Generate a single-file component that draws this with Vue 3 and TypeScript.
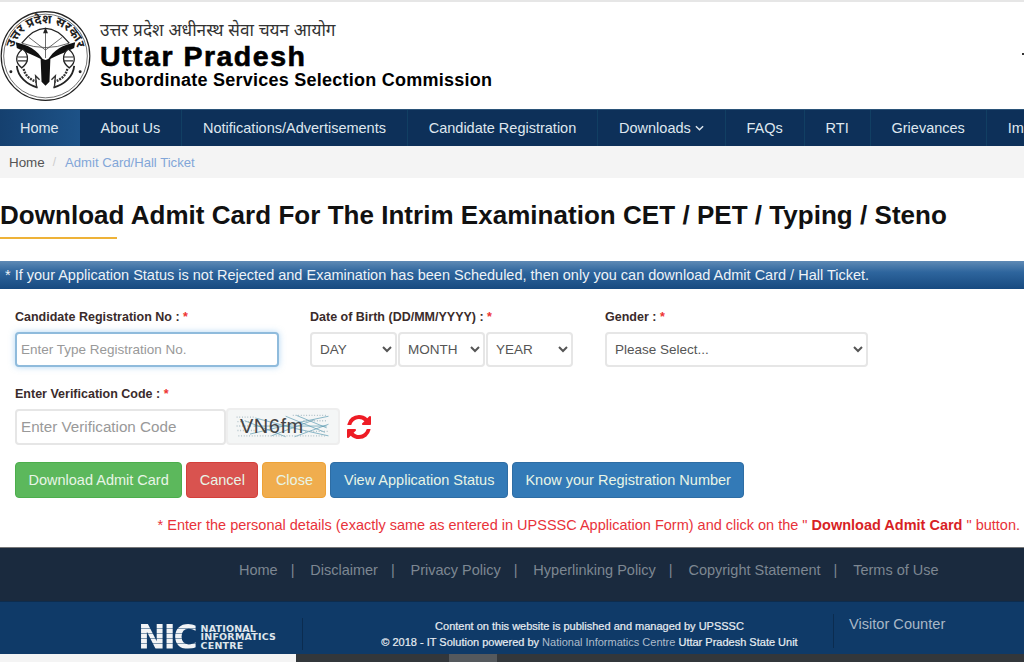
<template>
  <div class="page">
    <header class="masthead">
      <svg class="emblem" viewBox="0 0 92 92" aria-hidden="true">
        <defs>
          <path id="ring-text" d="M15 57.3 A33 33 0 1 1 77 57.3" />
        </defs>
        <circle cx="46" cy="46" r="44.8" fill="#fff" stroke="#222" stroke-width="1.2" />
        <circle cx="46" cy="46" r="42.3" fill="none" stroke="#333" stroke-width="0.7" />
        <text class="emblem__text"><textPath href="#ring-text" startOffset="50%" text-anchor="middle">उत्तर प्रदेश सरकार</textPath></text>
        <path d="M22 33 Q46 3 70 33" fill="none" stroke="#222" stroke-width="1.2" />
        <path d="M22 33 Q46 42 70 33 M46 18 V48 M29 27 L46 40 L63 27" fill="none" stroke="#444" stroke-width="0.8" />
        <path d="M43.5 23 L46 17 L48.5 23 Z" fill="#222" />
        <path d="M16 32 C28 35 38 39 44 51 C37 46 27 43 17 38 Z" fill="#111" />
        <path d="M76 32 C64 35 54 39 48 51 C55 46 65 43 75 38 Z" fill="#111" />
        <path d="M41 47 Q46 53 51 47 L50 72 L46 76 L42 72 Z" fill="#111" />
        <path d="M23 39 C15 45 15 53 22 58 C29 53 30 45 23 39 Z" fill="#fff" stroke="#222" stroke-width="1.3" />
        <path d="M69 39 C77 45 77 53 70 58 C63 53 62 45 69 39 Z" fill="#fff" stroke="#222" stroke-width="1.3" />
        <path d="M18 47 H28 M18 51 H28 M64 47 H74 M64 51 H74" fill="none" stroke="#333" stroke-width="1.2" />
        <path d="M17 56 C18 67 27 75 38 78 M75 56 C74 67 65 75 54 78" fill="none" stroke="#222" stroke-width="1.8" />
        <path d="M24 59 C25 65 30 70 37 72 M68 59 C67 65 62 70 55 72" fill="none" stroke="#333" stroke-width="2.4" stroke-dasharray="2 1" />
        <path d="M37 78 L36 66 L40 70 M55 78 L56 66 L52 70" fill="none" stroke="#333" stroke-width="1.4" />
        <circle cx="11" cy="62" r="1.5" fill="#222" />
        <circle cx="81" cy="62" r="1.5" fill="#222" />
      </svg>
      <div class="masthead__titles">
        <div class="masthead__hindi">उत्तर प्रदेश अधीनस्थ सेवा चयन आयोग</div>
        <div class="masthead__state">Uttar Pradesh</div>
        <div class="masthead__body">Subordinate Services Selection Commission</div>
      </div>
      <span class="masthead__edge"></span>
    </header>

    <nav class="nav">
      <a v-for="item in navItems" :key="item.label" class="nav__item" :class="{ 'nav__item--active': item.active }">
        {{ item.label }}
        <svg v-if="item.caret" class="nav__caret" viewBox="0 0 10 6" aria-hidden="true">
          <path d="M1 1 L5 5 L9 1" fill="none" stroke="currentColor" stroke-width="1.6" />
        </svg>
      </a>
    </nav>

    <div class="crumbs">
      <span class="crumbs__home">Home</span>
      <span class="crumbs__sep">/</span>
      <span class="crumbs__here">Admit Card/Hall Ticket</span>
    </div>

    <h1 class="title">Download Admit Card For The Intrim Examination CET / PET / Typing / Steno</h1>
    <div class="title-rule"></div>

    <div class="notice">* If your Application Status is not Rejected and Examination has been Scheduled, then only you can download Admit Card / Hall Ticket.</div>

    <form class="form" @submit.prevent>
      <div class="form__row">
        <div class="field field--reg">
          <label class="field__label">Candidate Registration No : <em>*</em></label>
          <input class="control control--focus" type="text" placeholder="Enter Type Registration No." />
        </div>
        <div class="field field--dob">
          <label class="field__label">Date of Birth (DD/MM/YYYY) : <em>*</em></label>
          <div class="dob">
            <select v-for="part in dobParts" :key="part" class="control control--select">
              <option>{{ part }}</option>
            </select>
          </div>
        </div>
        <div class="field field--gender">
          <label class="field__label">Gender : <em>*</em></label>
          <select class="control control--select">
            <option>Please Select...</option>
          </select>
        </div>
      </div>

      <div class="field field--code">
        <label class="field__label">Enter Verification Code : <em>*</em></label>
        <div class="code">
          <input class="control control--code" type="text" placeholder="Enter Verification Code" />
          <div class="captcha">
            <svg class="captcha__noise" viewBox="0 0 114 37" aria-hidden="true">
              <path d="M20 27 L70 15 L108 7 M26 9 L72 21 L108 29 M44 29 L92 11 M60 7 L104 25 M24 18 H106 M14 12 L60 30 M70 30 L108 16 M72 6 L106 20" fill="none" stroke="#5f9db3" stroke-width="0.8" />
              <path d="M5 8 H26 M6 13 H24 M5 18 H22 M6 23 H26 M7 29 H106 M68 6 H107 M80 12 H107 M82 24 H107" fill="none" stroke="#a9bcc4" stroke-width="1.6" stroke-dasharray="1 2" />
            </svg>
            <span class="captcha__text">VN6fm</span>
          </div>
          <svg class="refresh" viewBox="0 0 1792 1792" aria-hidden="true">
            <path fill="#ee1c25" d="M1639 1056q0 5-1 7-64 268-268 434.5t-478 166.5q-146 0-282.5-55t-243.5-157l-129 129q-19 19-45 19t-45-19-19-45v-448q0-26 19-45t45-19h448q26 0 45 19t19 45-19 45l-137 137q71 66 161 102t187 36q134 0 250-65t186-179q11-17 53-117 8-23 30-23h192q13 0 22.5 9.5t9.5 22.5zm25-800v448q0 26-19 45t-45 19h-448q-26 0-45-19t-19-45 19-45l138-138q-148-137-349-137-134 0-250 65t-186 179q-11 17-53 117-8 23-30 23h-199q-13 0-22.5-9.5t-9.5-22.5v-7q65-268 270-434.5t480-166.5q146 0 284 55.5t245 156.5l130-129q19-19 45-19t45 19 19 45z" />
          </svg>
        </div>
      </div>

      <div class="actions">
        <button v-for="btn in buttons" :key="btn.label" class="btn" :class="`btn--${btn.kind}`" type="button">{{ btn.label }}</button>
      </div>

      <p class="hint">* Enter the personal details (exactly same as entered in UPSSSC Application Form) and click on the " <strong>Download Admit Card</strong> " button.</p>
    </form>

    <footer class="foot">
      <div class="foot__links">
        <template v-for="(link, i) in footLinks" :key="link">
          <a>{{ link }}</a>
          <span v-if="i < footLinks.length - 1" class="foot__bar">|</span>
        </template>
      </div>
      <div class="foot__info">
        <div class="nic">
          <span class="nic__mark">NIC</span>
          <span class="nic__name">NATIONAL<br />INFORMATICS<br />CENTRE</span>
        </div>
        <div class="foot__credit">
          <div>Content on this website is published and managed by UPSSSC</div>
          <div>© 2018 - IT Solution powered by <span class="foot__muted">National Informatics Centre</span> Uttar Pradesh State Unit</div>
        </div>
        <div class="foot__counter">Visitor Counter</div>
      </div>
      <div class="foot__strip">
        <div class="foot__strip-light"></div>
        <div class="foot__strip-dark"><span></span></div>
      </div>
    </footer>
  </div>
</template>

<script setup lang="ts">
interface NavItem {
  label: string
  active?: boolean
  caret?: boolean
}

const navItems: NavItem[] = [
  { label: 'Home', active: true },
  { label: 'About Us' },
  { label: 'Notifications/Advertisements' },
  { label: 'Candidate Registration' },
  { label: 'Downloads', caret: true },
  { label: 'FAQs' },
  { label: 'RTI' },
  { label: 'Grievances' },
  { label: 'Important Links' },
]

const dobParts = ['DAY', 'MONTH', 'YEAR']

const buttons = [
  { label: 'Download Admit Card', kind: 'green' },
  { label: 'Cancel', kind: 'red' },
  { label: 'Close', kind: 'orange' },
  { label: 'View Application Status', kind: 'blue' },
  { label: 'Know your Registration Number', kind: 'blue' },
]

const footLinks = ['Home', 'Disclaimer', 'Privacy Policy', 'Hyperlinking Policy', 'Copyright Statement', 'Terms of Use']
</script>

<style>
html,
body {
  margin: 0;
  background: #fff;
  overflow: hidden;
}
</style>

<style scoped>
.page {
  width: 1024px;
  height: 662px;
  overflow: hidden;
  font-family: "Liberation Sans", Arial, "Noto Sans", sans-serif;
  color: #333;
  background: #fff;
}

.masthead {
  position: relative;
  display: flex;
  align-items: flex-start;
  height: 109px;
  box-sizing: border-box;
  border-top: 2px solid #e6e6e6;
  gap: 9px;
}

.emblem {
  width: 91px;
  height: 92px;
  margin-top: 8px;
  flex: none;
}

.emblem__text {
  font-size: 12.5px;
  font-weight: 700;
  fill: #222;
}

.masthead__titles {
  color: #000;
  padding-top: 18px;
}

.masthead__hindi {
  font-size: 17.2px;
  line-height: 20px;
  color: #333;
}

.masthead__state {
  font-size: 28.5px;
  font-weight: 700;
  line-height: 30px;
  letter-spacing: 1.5px;
  margin-top: 1px;
  -webkit-text-stroke: 0.6px #000;
}

.masthead__body {
  font-size: 18px;
  font-weight: 700;
  line-height: 20px;
  letter-spacing: 0.25px;
  margin-top: -1px;
}

.masthead__edge {
  position: absolute;
  right: 0;
  top: 51px;
  width: 2px;
  height: 2px;
  background: #333;
}

.nav {
  display: flex;
  height: 37px;
  overflow: hidden;
  background: #0d3059;
  border-top: 1px solid #2b5479;
  box-sizing: border-box;
}

.nav__item {
  flex: none;
  display: flex;
  align-items: center;
  gap: 4px;
  padding: 0 20.9px;
  font-size: 14.5px;
  color: #dfe7ef;
  border-right: 1px solid #113f63;
  white-space: nowrap;
}

.nav__item--active {
  padding: 0 21px 0 20px;
  background: linear-gradient(90deg, #15406f, #1d5287);
  border-right: none;
}

.nav__caret {
  width: 9px;
  height: 6px;
}

.crumbs {
  display: flex;
  align-items: center;
  height: 32px;
  padding-left: 9px;
  gap: 8px;
  background: #f4f4f4;
  font-size: 13.4px;
}

.crumbs__home {
  color: #555;
}

.crumbs__sep {
  color: #ccc;
  font-size: 12px;
}

.crumbs__here {
  margin-left: 1px;
  font-size: 13.1px;
  color: #82a6d8;
}

.title {
  margin: 0;
  padding-top: 22px;
  font-size: 26px;
  line-height: 30px;
  font-weight: 700;
  color: #111;
  letter-spacing: 0.03px;
  white-space: nowrap;
}

.title-rule {
  width: 117px;
  height: 2px;
  margin-top: 7px;
  background: #eeb238;
}

.notice {
  margin-top: 22px;
  height: 28px;
  line-height: 28px;
  padding-left: 5px;
  font-size: 14.5px;
  color: #eef3f8;
  background: linear-gradient(#5f8ab5, #2e659d 40%, #174a80);
  white-space: nowrap;
}

.form {
  padding: 21px 0 0 15px;
}

.form__row {
  display: flex;
}

.field {
  display: flex;
  flex-direction: column;
}

.field__label {
  font-size: 12.5px;
  line-height: 15px;
  font-weight: 700;
  color: #3a2b2b;
  margin-bottom: 7px;
}

.field__label em {
  color: #e33;
  font-style: normal;
}

.field--reg {
  width: 264px;
  margin-right: 31px;
}

.field--dob {
  width: 263px;
  margin-right: 32px;
}

.field--gender {
  width: 263px;
}

.field--code {
  margin-top: 20px;
}

.field--code .field__label {
  margin-bottom: 6px;
}

.control {
  height: 35px;
  box-sizing: border-box;
  border: 2px solid #e6e6e6;
  border-radius: 4px;
  background: #fff;
  font-family: inherit;
  font-size: 13.5px;
  color: #555;
  outline: none;
}

.control::placeholder {
  color: #999;
}

.control--focus {
  width: 264px;
  padding: 0 4px;
  border-color: #8fbbdc;
  box-shadow: 0 0 6px rgba(102, 175, 233, 0.5);
}

.control--select {
  width: 100%;
  padding: 0 4px 0 4px;
}

.dob {
  display: grid;
  grid-template-columns: repeat(3, 87px);
  gap: 1px;
}

.code {
  display: flex;
  align-items: center;
}

.control--code {
  width: 211px;
  height: 36px;
  padding: 0 4px;
  font-size: 15.2px;
}

.captcha {
  position: relative;
  width: 114px;
  height: 37px;
  box-sizing: border-box;
  border: 2px solid #eee;
  border-radius: 4px;
  background: #f4f6f6;
  display: flex;
  align-items: center;
  overflow: hidden;
}

.captcha__noise {
  position: absolute;
  inset: 0;
  width: 100%;
  height: 100%;
}

.captcha__text {
  position: relative;
  margin-left: 12px;
  font-size: 20px;
  letter-spacing: 0.5px;
  color: #444;
}

.refresh {
  width: 28px;
  height: 28px;
  margin-left: 5px;
}

.actions {
  display: flex;
  gap: 4px;
  margin-top: 17px;
}

.btn {
  height: 36px;
  padding: 0 12.5px;
  border: 1px solid transparent;
  border-radius: 4px;
  font-family: inherit;
  font-size: 14.5px;
  color: #e8f5e6;
}

.btn--green {
  background: #5cb85c;
  border-color: #4cae4c;
}

.btn--red {
  background: #d9534f;
  border-color: #d43f3a;
}

.btn--orange {
  background: #f0ad4e;
  border-color: #eea236;
}

.btn--blue {
  background: #337ab7;
  border-color: #2e6da4;
}

.hint {
  margin: 18px 4px 0 0;
  text-align: right;
  font-size: 14.5px;
  line-height: 18px;
  color: #e8323a;
  white-space: nowrap;
}

.hint strong {
  color: #d81f26;
}

.foot {
  margin-top: 13px;
  border-top: 1px solid #777;
}

.foot__links {
  display: flex;
  align-items: center;
  height: 53px;
  padding: 0 0 9px 239px;
  box-sizing: border-box;
  background: #1a2a3e;
  font-size: 14.5px;
  color: #7d8792;
}

.foot__bar {
  margin: 0 15.8px 0 13px;
}

.foot__info {
  display: flex;
  height: 53px;
  box-sizing: border-box;
  background: #0f3a68;
  border-top: 1px solid #0d2c4e;
}

.nic {
  display: flex;
  align-items: center;
  width: 164px;
  margin-left: 138px;
  height: 27px;
  margin-top: 22px;
  gap: 5px;
}

.nic__mark {
  font-family: "DejaVu Sans", sans-serif;
  font-weight: 700;
  font-size: 33px;
  line-height: 27px;
  letter-spacing: -2.2px;
  background: repeating-linear-gradient(#f2f4f6 0 4px, #7f97ae 4px 5px);
  -webkit-background-clip: text;
  background-clip: text;
  color: transparent;
}

.nic__name {
  font-family: "DejaVu Sans", sans-serif;
  font-weight: 700;
  font-size: 9.5px;
  line-height: 8.3px;
  letter-spacing: 0.2px;
  color: #dfe6ec;
}

.foot__credit {
  width: 531px;
  margin-top: 16px;
  padding-left: 43px;
  box-sizing: border-box;
  border-left: 1px solid #0b2c50;
  text-align: center;
  font-size: 11px;
  line-height: 16px;
  color: #e8edf2;
  height: 32px;
  -webkit-text-stroke: 0.2px #e8edf2;
  white-space: nowrap;
}

.foot__muted {
  color: #aebccb;
  -webkit-text-stroke: 0;
}

.foot__counter {
  margin-top: 12px;
  padding: 2px 0 0 15px;
  border-left: 1px solid #0b2c50;
  height: 34px;
  box-sizing: border-box;
  font-size: 14.6px;
  color: #a9b7c6;
}

.foot__strip {
  display: flex;
  height: 9px;
}

.foot__strip-light {
  width: 296px;
  background: #f4f4f4;
}

.foot__strip-dark {
  flex: 1;
  background: #33373b;
  padding-left: 153px;
}

.foot__strip-dark span {
  display: block;
  width: 48px;
  height: 9px;
  background: #55595d;
}
</style>
